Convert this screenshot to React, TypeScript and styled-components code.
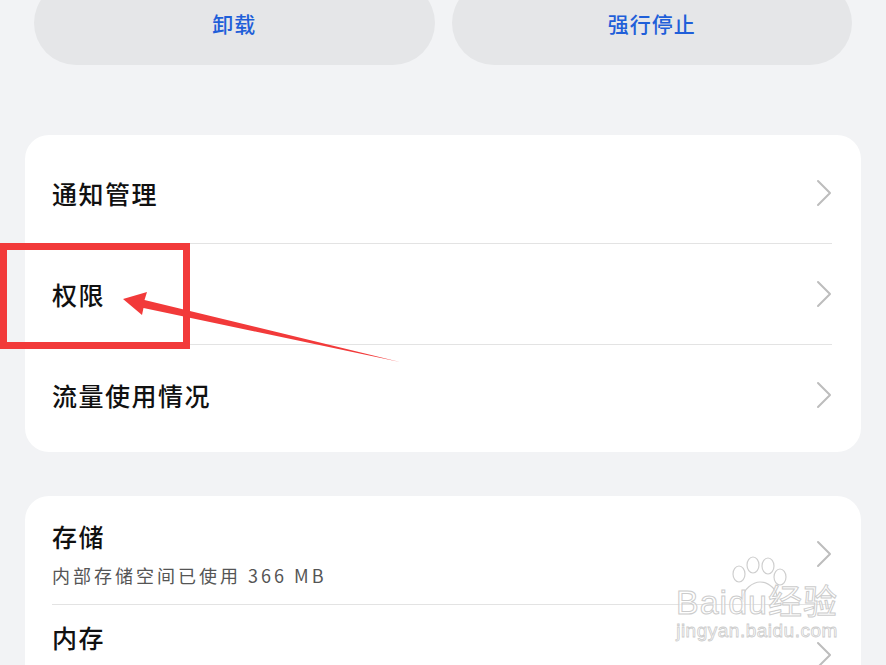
import React from "react";
import styled, { createGlobalStyle } from "styled-components";

interface MenuItemType {
  title: string;
  desc?: string;
}

const firstGroup: MenuItemType[] = [
  { title: "通知管理" },
  { title: "权限" },
  { title: "流量使用情况" },
];

const secondGroup: MenuItemType[] = [
  { title: "存储", desc: "内部存储空间已使用 366 MB" },
  { title: "内存", desc: "过去 3 小时平均使用了 86 MB 内存" },
];

const Chevron = () => (
  <svg width="16" height="28" viewBox="0 0 16 28">
    <polyline
      points="2,2 14,14 2,26"
      fill="none"
      stroke="#bdbdbd"
      strokeWidth="2"
      strokeLinecap="round"
      strokeLinejoin="round"
    />
  </svg>
);

const App: React.FC = () => {
  return (
    <>
      <GlobalStyle />
      <S.Page>
        <S.ActionBar>
          <S.ActionBtn>卸载</S.ActionBtn>
          <S.ActionBtn>强行停止</S.ActionBtn>
        </S.ActionBar>

        <S.Card>
          {firstGroup.map(({ title }) => (
            <S.Row key={title}>
              <S.RowText>
                <S.Title>{title}</S.Title>
              </S.RowText>
              <Chevron />
            </S.Row>
          ))}
        </S.Card>

        <S.Card $gap={44}>
          {secondGroup.map(({ title, desc }) => (
            <S.Row key={title}>
              <S.RowText>
                <S.Title>{title}</S.Title>
                <S.Desc>{desc}</S.Desc>
              </S.RowText>
              <Chevron />
            </S.Row>
          ))}
        </S.Card>

        {/* annotation: red box + arrow */}
        <S.Highlight />
        <S.ArrowSvg width="886" height="665" viewBox="0 0 886 665">
          <polygon
            points="123,299 147,292 144.5,300 400,362 143.5,308 142,315"
            fill="#f23a3a"
          />
        </S.ArrowSvg>

        <S.Watermark>
          <svg width="80" height="50" viewBox="0 0 80 50">
            <g fill="#fff" stroke="#cfcfcf" strokeWidth="1.2">
              <ellipse cx="22" cy="18" rx="6" ry="8" />
              <ellipse cx="36" cy="9" rx="6" ry="8" />
              <ellipse cx="51" cy="10" rx="6" ry="8" />
              <ellipse cx="63" cy="21" rx="6" ry="8" />
              <path d="M26 46 C 24 32, 38 26, 43 26 C 52 26, 62 34, 60 46" />
            </g>
          </svg>
          <S.WmBrand>Baidu经验</S.WmBrand>
          <S.WmSite>jingyan.baidu.com</S.WmSite>
        </S.Watermark>
      </S.Page>
    </>
  );
};

const GlobalStyle = createGlobalStyle`
  html, body {
    margin: 0;
    padding: 0;
    background: #f2f3f5;
    font-family: "Noto Sans CJK SC", "Noto Sans", sans-serif;
  }
  #root {
    width: 886px;
    height: 665px;
    overflow: hidden;
  }
`;

const S = {
  Page: styled.div`
    position: relative;
    width: 886px;
    height: 665px;
    overflow: hidden;
    background: #f2f3f5;
  `,
  ActionBar: styled.div`
    display: flex;
    gap: 17px;
    padding: 0 34px;
    margin-top: -19px;
  `,
  ActionBtn: styled.div`
    flex: 1;
    height: 84px;
    border-radius: 42px;
    background: #e5e6e8;
    display: flex;
    align-items: center;
    justify-content: center;
    color: #1f5fd9;
    font-size: 21px;
    font-weight: 500;
    letter-spacing: 1px;
  `,
  Card: styled.div<{ $gap?: number }>`
    margin: ${({ $gap }) => $gap ?? 70}px 25px 0;
    background: #ffffff;
    border-radius: 24px;
    padding: 8px 29px 7px 27px;
  `,
  Row: styled.div`
    display: flex;
    align-items: center;
    justify-content: space-between;
    min-height: 100px;
    border-bottom: 1px solid #e3e3e3;
    &:last-child {
      border-bottom: none;
    }
  `,
  RowText: styled.div`
    display: flex;
    flex-direction: column;
    gap: 10px;
  `,
  Title: styled.span`
    font-size: 25px;
    line-height: 32px;
    font-weight: 500;
    letter-spacing: 1.5px;
    color: #111111;
  `,
  Desc: styled.span`
    font-size: 18px;
    line-height: 26px;
    letter-spacing: 3px;
    color: #555555;
  `,
  Highlight: styled.div`
    position: absolute;
    left: 0;
    top: 243px;
    width: 190px;
    height: 106px;
    box-sizing: border-box;
    border: 7px solid #f23a3a;
    pointer-events: none;
  `,
  ArrowSvg: styled.svg`
    position: absolute;
    left: 0;
    top: 0;
    pointer-events: none;
  `,
  Watermark: styled.div`
    position: absolute;
    left: 676px;
    top: 556px;
    width: 162px;
    display: flex;
    flex-direction: column;
    align-items: center;
    pointer-events: none;
    svg {
      margin-bottom: -22px;
    }
  `,
  WmBrand: styled.span`
    font-family: "Liberation Sans", "Noto Sans CJK SC", sans-serif;
    font-size: 34px;
    line-height: 36px;
    color: rgba(255, 255, 255, 0.6);
    -webkit-text-stroke: 1px #cccccc;
    letter-spacing: 1px;
  `,
  WmSite: styled.span`
    font-family: "Liberation Sans", sans-serif;
    font-size: 19px;
    line-height: 22px;
    color: rgba(255, 255, 255, 0.6);
    -webkit-text-stroke: 0.8px #cccccc;
    letter-spacing: 0.5px;
  `,
};

export default App;
